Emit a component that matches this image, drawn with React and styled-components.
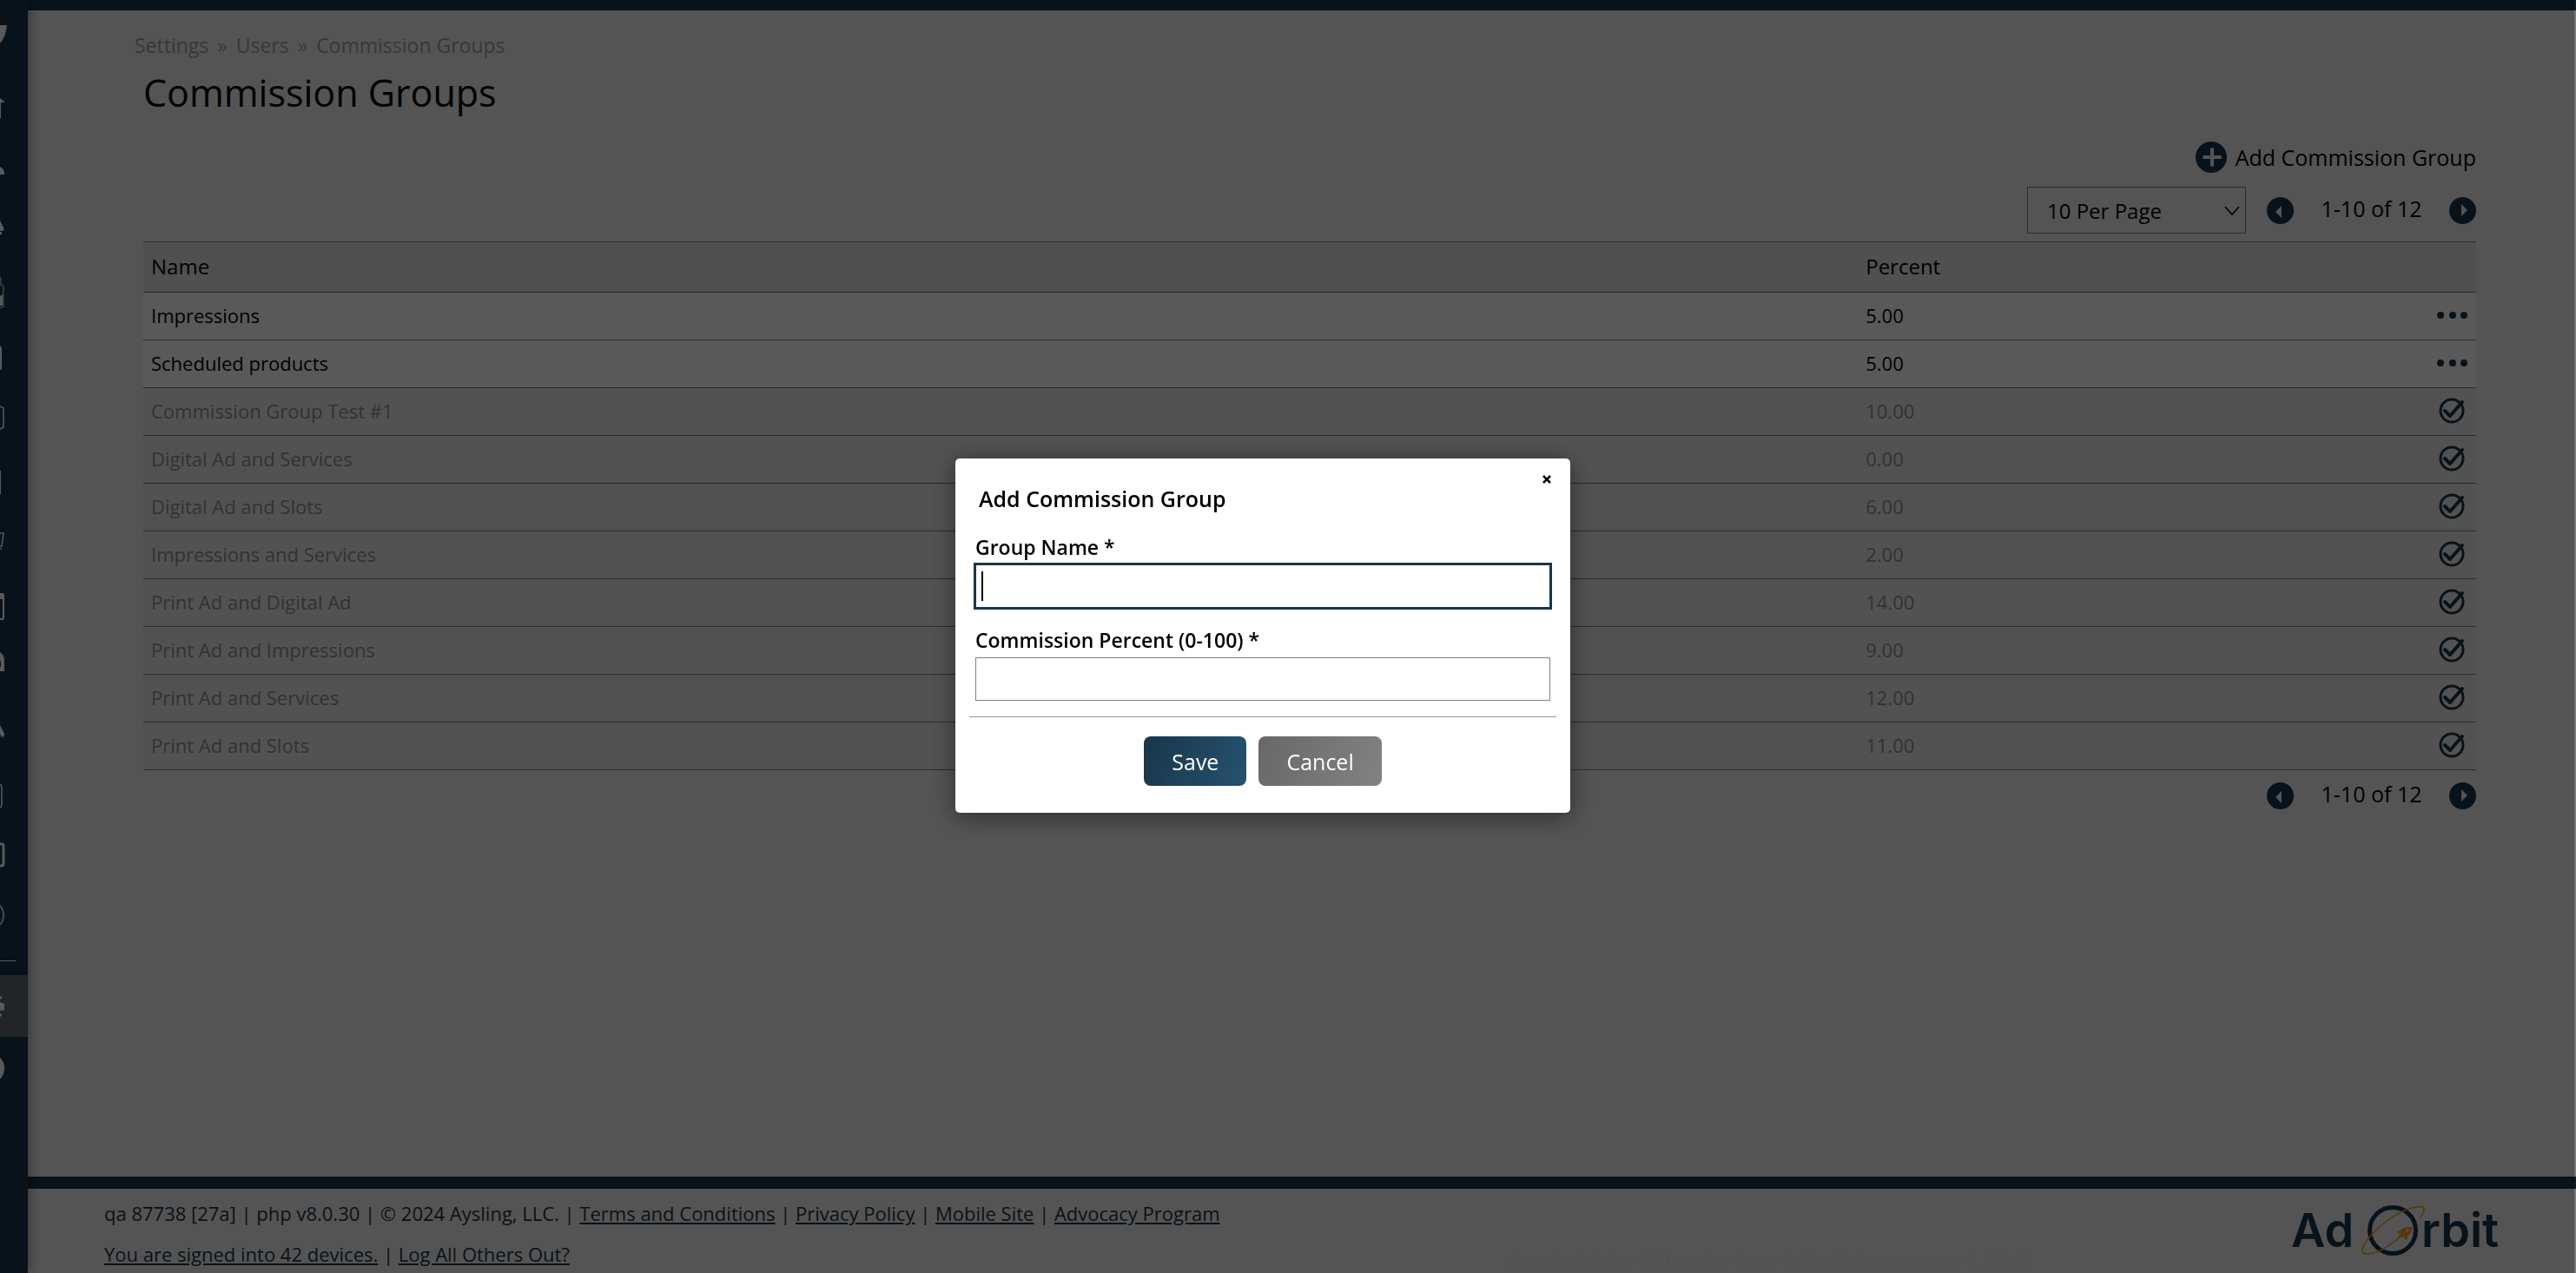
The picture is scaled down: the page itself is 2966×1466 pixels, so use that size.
import styled, { createGlobalStyle, css } from 'styled-components';

const navy = '#18364b';

const groups = [
  { name: 'Impressions', percent: '5.00', active: true },
  { name: 'Scheduled products', percent: '5.00', active: true },
  { name: 'Commission Group Test #1', percent: '10.00' },
  { name: 'Digital Ad and Services', percent: '0.00' },
  { name: 'Digital Ad and Slots', percent: '6.00' },
  { name: 'Impressions and Services', percent: '2.00' },
  { name: 'Print Ad and Digital Ad', percent: '14.00' },
  { name: 'Print Ad and Impressions', percent: '9.00' },
  { name: 'Print Ad and Services', percent: '12.00' },
  { name: 'Print Ad and Slots', percent: '11.00' },
];

// Only the right edge of each icon shows, the rail is slid almost fully shut
const navItems = [
  { label: 'Home', icon: <path d="M0 9 L5 13 V14 H1 V32 H0 Z" /> },
  { label: 'Contacts', icon: <path d="M0 17 Q4 19 5 23 V26 H0 Z" /> },
  { label: 'Sales', icon: <path d="M0 8 L5 18 L3 20 H0 Z M0 21 H2 V24 H0 Z" /> },
  {
    label: 'Orders',
    icon: (
      <>
        <path d="M0 2 L1 4 V10 M0 11 H3 Q4 11 4 13 V35 Q4 37 3 37 H0" fill="none" stroke="#fff" />
        <path d="M0 24 L3 22 V35 H0 Z" />
      </>
    ),
  },
  { label: 'Reports', icon: <path d="M0 10 Q2 11 2 14 V35 Q2 38 0 38 Z" /> },
  { label: 'Inventory', icon: <path d="M0 9 L4 11 V33 L0 35" fill="none" stroke="#fff" strokeWidth="1.500" /> },
  { label: 'Production', icon: <path d="M0 12 H1 V39 H0 Z" /> },
  { label: 'Store', icon: <path d="M0 13 H4 L2 28 H0 M1 30 V32" fill="none" stroke="#fff" strokeWidth="1.500" /> },
  { label: 'Calendar', icon: <path d="M0 11 H3 Q5 11 5 13 V40 Q5 42 3 42 H0 V40 H3 V18 H0 Z" /> },
  { label: 'Billing', icon: <path d="M0 8 Q5 11 5 18 V30 H0 V25 H1 V19 L0 17 Z" /> },
  { label: 'Tools', icon: <path d="M0 21 L5 31 V35 L3 33 L2 36 L0 31 Z" /> },
  { label: 'Documents', icon: <path d="M0 18 Q2 19 2 22 V41 Q2 44 0 45" fill="none" stroke="#fff" strokeWidth="1.500" /> },
  { label: 'Forms', icon: <path d="M0 16 H2 Q4 16 4 19 V38 Q4 41 2 41 H0" fill="none" stroke="#fff" strokeWidth="3" /> },
  { label: 'History', icon: <path d="M0 16 Q4 20 4 27 Q4 34 0 38" fill="none" stroke="#fff" strokeWidth="1.500" /> },
];

const GlobalStyle = createGlobalStyle`
  *, *::before, *::after {
    box-sizing: border-box;
  }

  body {
    margin: 0;
    background: #fff;
    font-family: "Open Sans", "Noto Sans", sans-serif;
    color: #000;
  }

  button, input, select {
    font-family: inherit;
  }
`;

const NavIcon = ({ children }) => (
  <svg width="8" height="60" viewBox="0 0 8 60" fill="#fff" aria-hidden="true">
    {children}
  </svg>
);

const PlusIcon = () => (
  <svg width="36" height="36" viewBox="0 0 36 36" aria-hidden="true">
    <circle cx="18" cy="18" r="18" fill={navy} />
    <path d="M19 9 V27 M10 18 H28" stroke="#f0f0f0" strokeWidth="4" strokeLinecap="round" />
  </svg>
);

const ArrowIcon = ({ left }) => (
  <svg width="31" height="31" viewBox="0 0 31 31" aria-hidden="true">
    <circle cx="15.5" cy="15.5" r="15.5" fill={navy} />
    <path d={left ? 'M17 10 V24 L10 17 Z' : 'M14 8 V22 L21 15 Z'} fill="#f0f0f0" />
  </svg>
);

const DotsIcon = () => (
  <svg width="36" height="30" viewBox="0 0 36 30" fill={navy} aria-hidden="true">
    <circle cx="4" cy="15" r="4" />
    <circle cx="18" cy="15" r="4" />
    <circle cx="31" cy="15" r="4" />
  </svg>
);

const CheckIcon = () => (
  <svg width="36" height="30" viewBox="0 0 36 30" fill="none" stroke={navy} aria-hidden="true">
    <circle cx="17" cy="15" r="13" strokeWidth="3" />
    <path d="M9 15 L15 21 L29 5" strokeWidth="4" strokeLinecap="round" strokeLinejoin="round" />
  </svg>
);

const OrbitLogo = () => (
  <Logo width="248" height="78" viewBox="0 0 248 78" role="img" aria-label="Ad Orbit">
    <g fill={navy} fontFamily="Inter, sans-serif" fontWeight="600" fontSize="54">
      <text x="0" y="53">Ad</text>
      <text x="150" y="53">rbit</text>
    </g>
    <circle cx="117" cy="34" r="26.500" fill="none" stroke={navy} strokeWidth="5" />
    <g fill="none" stroke="#f59a23" strokeWidth="1.500" strokeLinecap="round">
      <path d="M149 19 C155 11 155 5 144 7 C126 10 103 26 90 42 C80 54 79 62 88 61 C98 61 113 52 126 41" />
    </g>
    <path
      d="M139 30 C132 30 128 31 126 34 L122 35 L123 37 L126 38 L123 41 L130 42 L132 45 L134 44 L134 40 C138 38 139 34 139 30 Z"
      fill="#f59a23"
    />
    <circle cx="134" cy="34" r="1.500" fill="#f0f0f0" />
  </Logo>
);

const Pager = () => (
  <PagerNav aria-label="Pagination">
    <IconButton aria-label="Previous page">
      <ArrowIcon left />
    </IconButton>
    <PagerText>1-10 of 12</PagerText>
    <IconButton aria-label="Next page">
      <ArrowIcon />
    </IconButton>
  </PagerNav>
);

const Sidebar = () => (
  <Rail aria-label="Main">
    <RailLogo>
      <svg width="12" height="28" viewBox="0 0 12 28" fill="#fff" aria-hidden="true">
        <path d="M0 1 H8 Q7 14 0 22 Z" />
      </svg>
    </RailLogo>
    {navItems.map((item) => (
      <RailLink key={item.label} href="#" aria-label={item.label}>
        <NavIcon>{item.icon}</NavIcon>
      </RailLink>
    ))}
    <RailDivider />
    <RailLink href="#" aria-label="Settings" $current>
      <NavIcon>
        <path d="M0 24 L2 25 V27 L0 28 Z M0 31 L5 33 V40 L0 41 Z M0 44 L2 45 V47 L0 48 Z" />
      </NavIcon>
    </RailLink>
    <RailLink href="#" aria-label="Help">
      <NavIcon>
        <path d="M0 24 Q5 29 5 36 Q5 44 0 49 Z" />
      </NavIcon>
    </RailLink>
  </Rail>
);

const App = () => {
  return (
    <>
      <GlobalStyle />
      <Page>
        <Sidebar />
        <Body>
          <Main>
            <Breadcrumbs aria-label="Breadcrumb">
              <Crumb href="#">Settings</Crumb>
              <span>»</span>
              <Crumb href="#">Users</Crumb>
              <span>»</span>
              <Crumb href="#">Commission Groups</Crumb>
            </Breadcrumbs>
            <Content>
              <Title>Commission Groups</Title>
              <AddRow>
                <AddButton>
                  <PlusIcon />
                  Add Commission Group
                </AddButton>
              </AddRow>
              <Toolbar>
                <SelectWrap>
                  <PageSelect aria-label="Rows per page" defaultValue="10">
                    <option value="10">10 Per Page</option>
                    <option value="25">25 Per Page</option>
                  </PageSelect>
                  <Chevron width="18" height="12" viewBox="0 0 18 12" aria-hidden="true">
                    <path d="M1 1 L9 10 L17 1" fill="none" stroke="#000" strokeWidth="1.500" />
                  </Chevron>
                </SelectWrap>
                <Pager />
              </Toolbar>
              <Table>
                <thead>
                  <tr>
                    <HeadCell $wide>Name</HeadCell>
                    <HeadCell>Percent</HeadCell>
                    <HeadCell aria-label="Actions" />
                  </tr>
                </thead>
                <tbody>
                  {groups.map((group) => (
                    <Row key={group.name} $active={group.active}>
                      <Cell>{group.name}</Cell>
                      <Cell>{group.percent}</Cell>
                      <Cell>
                        <RowAction aria-label={group.active ? 'More actions' : 'Activate'}>
                          {group.active ? <DotsIcon /> : <CheckIcon />}
                        </RowAction>
                      </Cell>
                    </Row>
                  ))}
                </tbody>
              </Table>
              <BottomBar>
                <Pager />
              </BottomBar>
            </Content>
          </Main>
          <Footer>
            <FooterText>
              <p>
                qa 87738 [27a] | php v8.0.30 | © 2024 Aysling, LLC. | <a href="#">Terms and Conditions</a> |{' '}
                <a href="#">Privacy Policy</a> | <a href="#">Mobile Site</a> | <a href="#">Advocacy Program</a>
              </p>
              <p>
                <a href="#">You are signed into 42 devices.</a> | <a href="#">Log All Others Out?</a>
              </p>
            </FooterText>
            <Stats>Queries Made: 65 | render time: 0.29s | Max memory: 8.79MB</Stats>
            <OrbitLogo />
          </Footer>
        </Body>
      </Page>
      <Overlay>
        <Modal role="dialog" aria-modal="true" aria-labelledby="modal-title">
          <CloseButton aria-label="Close">
            <svg width="10" height="10" viewBox="0 0 10 10" aria-hidden="true">
              <path d="M1 1 L9 9 M9 1 L1 9" stroke="#000" strokeWidth="2.500" />
            </svg>
          </CloseButton>
          <ModalTitle id="modal-title">Add Commission Group</ModalTitle>
          <Field>
            <Label htmlFor="group-name">Group Name *</Label>
            <InputWrap $focused>
              <Input id="group-name" type="text" $focused />
            </InputWrap>
          </Field>
          <Field>
            <Label htmlFor="commission-percent">Commission Percent (0-100) *</Label>
            <InputWrap>
              <Input id="commission-percent" type="text" />
            </InputWrap>
          </Field>
          <Actions>
            <Button $primary>Save</Button>
            <Button>Cancel</Button>
          </Actions>
        </Modal>
      </Overlay>
    </>
  );
};

const Page = styled.div`
  display: flex;
  height: 100vh;
  overflow: hidden;
  background: #f0f0f0;
`;

const Rail = styled.nav`
  flex: none;
  display: flex;
  flex-direction: column;
  width: 32px;
  background: ${navy};
  box-shadow: 0 0 14px rgba(0, 0, 0, 0.5);
  z-index: 1;
`;

const RailLogo = styled.div`
  flex: none;
  height: 104px;
  padding-top: 28px;
`;

const RailLink = styled.a`
  flex: none;
  display: block;
  height: 71px;

  ${(props) =>
    props.$current &&
    css`
      background: #5f6a70;
    `}
`;

const RailDivider = styled.hr`
  width: 18px;
  height: 1px;
  margin: 8px 0 16px;
  border: 0;
  background: #fff;
`;

const Body = styled.div`
  flex: 1;
  display: flex;
  flex-direction: column;
  min-width: 0;
  border-top: 12px solid ${navy};
`;

const Main = styled.main`
  flex: 1;
  padding: 22px 115px 0 123px;
`;

const Breadcrumbs = styled.nav`
  display: flex;
  gap: 10px;
  font-size: 23px;
  line-height: 36px;
  color: #a0a0a0;
`;

const Crumb = styled.a`
  color: inherit;
  text-decoration: none;
`;

const Content = styled.div`
  padding-left: 10px;
`;

const Title = styled.h1`
  margin: 7px 0 0;
  font-size: 43px;
  font-weight: 400;
  line-height: 60px;
`;

const AddRow = styled.div`
  display: flex;
  justify-content: flex-end;
  margin-top: 26px;
`;

const AddButton = styled.button`
  display: flex;
  align-items: center;
  gap: 10px;
  padding: 0;
  border: 0;
  background: none;
  font-size: 25px;
  line-height: 36px;
  color: #000;
`;

const Toolbar = styled.div`
  display: flex;
  align-items: center;
  justify-content: flex-end;
  gap: 24px;
  padding: 16px 0 9px;
`;

const SelectWrap = styled.div`
  position: relative;
`;

const PageSelect = styled.select`
  appearance: none;
  width: 252px;
  height: 54px;
  padding: 0 22px;
  border: 1px solid #808080;
  border-radius: 0;
  background: transparent;
  font-size: 24px;
  color: #000;
`;

const Chevron = styled.svg`
  position: absolute;
  top: 22px;
  right: 7px;
  pointer-events: none;
`;

const PagerNav = styled.nav`
  display: flex;
  align-items: center;
  justify-content: space-between;
  width: 241px;
`;

const PagerText = styled.span`
  padding-bottom: 4px;
  font-size: 25px;
  line-height: 32px;
`;

const IconButton = styled.button`
  display: flex;
  padding: 0;
  border: 0;
  background: none;
`;

const RowAction = styled(IconButton)`
  margin-left: auto;
`;

const Table = styled.table`
  width: 100%;
  border-collapse: collapse;
  border-top: 1px solid #808080;
`;

const HeadCell = styled.th`
  width: ${(props) => (props.$wide ? '73.5%' : 'auto')};
  height: 58px;
  padding: 0 9px 2px;
  border-bottom: 1px solid #808080;
  background: #e4e4e4;
  font-size: 24px;
  font-weight: 400;
  text-align: left;
`;

const Row = styled.tr`
  background: ${(props) => (props.$active ? '#fff' : '#ebebeb')};
  color: ${(props) => (props.$active ? '#000' : '#909090')};
`;

const Cell = styled.td`
  height: 55px;
  padding: 0 9px 2px;
  border-bottom: 1px solid #808080;
  font-size: 22px;
`;

const BottomBar = styled.div`
  display: flex;
  justify-content: flex-end;
  padding-top: 11px;
`;

const Footer = styled.footer`
  display: flex;
  height: 111px;
  padding: 14px 80px 0 88px;
  border-top: 14px solid ${navy};
  color: ${navy};
`;

const FooterText = styled.div`
  font-size: 22px;
  line-height: 28px;

  p {
    margin: 0 0 19px;
  }

  a {
    color: inherit;
  }
`;

const Stats = styled.p`
  align-self: flex-end;
  margin: 0 299px 0 auto;
  padding-bottom: 2px;
  font-family: "Liberation Sans", Arial, sans-serif;
  font-size: 22px;
  line-height: 24px;
  color: #e2efef;
`;

const Logo = styled.svg`
  flex: none;
`;

const Overlay = styled.div`
  position: fixed;
  inset: 0;
  z-index: 10;
  display: flex;
  align-items: center;
  justify-content: center;
  padding: 0 56px 2px 0;
  border-right: 2px solid rgba(0, 0, 0, 0.5);
  background: rgba(0, 0, 0, 0.65);
  background-clip: padding-box;
`;

const Modal = styled.div`
  position: relative;
  width: 708px;
  padding: 33px 16px 31px;
  border-radius: 5px;
  background: #fff;
  box-shadow: 0 4px 28px rgba(0, 0, 0, 0.5);
`;

const CloseButton = styled.button`
  position: absolute;
  top: 9px;
  right: 12px;
  display: flex;
  padding: 10px;
  border: 0;
  background: none;
`;

const ModalTitle = styled.h2`
  margin: 0 0 24px 11px;
  font-size: 25px;
  font-weight: 600;
  line-height: 26px;
`;

const Field = styled.div`
  padding: 3px 7px 0;
  margin-bottom: 18px;
`;

const Label = styled.label`
  display: block;
  margin-bottom: 4px;
  font-size: 23px;
  font-weight: 600;
  line-height: 32px;
`;

const InputWrap = styled.div`
  position: relative;

  ${(props) =>
    props.$focused &&
    css`
      &::after {
        content: '';
        position: absolute;
        top: 8px;
        left: 7px;
        width: 2px;
        height: 34px;
        background: #000;
      }
    `}
`;

const Input = styled.input`
  display: block;
  width: 100%;
  height: 50px;
  padding: 0 8px;
  border: 1px solid #808080;
  border-radius: 0;
  font-size: 24px;

  ${(props) =>
    props.$focused &&
    css`
      border-color: ${navy};
      outline: 2px solid ${navy};
    `}
`;

const Actions = styled.div`
  display: flex;
  justify-content: center;
  gap: 14px;
  padding-top: 22px;
  border-top: 1px solid #959595;
`;

const Button = styled.button`
  height: 57px;
  padding: 0 32px;
  border: 0;
  border-radius: 8px;
  background: ${(props) =>
    props.$primary
      ? `linear-gradient(110deg, ${navy}, #26526f)`
      : 'linear-gradient(110deg, #686868, #828282)'};
  font-size: 25px;
  color: #fff;
`;

export default App;
